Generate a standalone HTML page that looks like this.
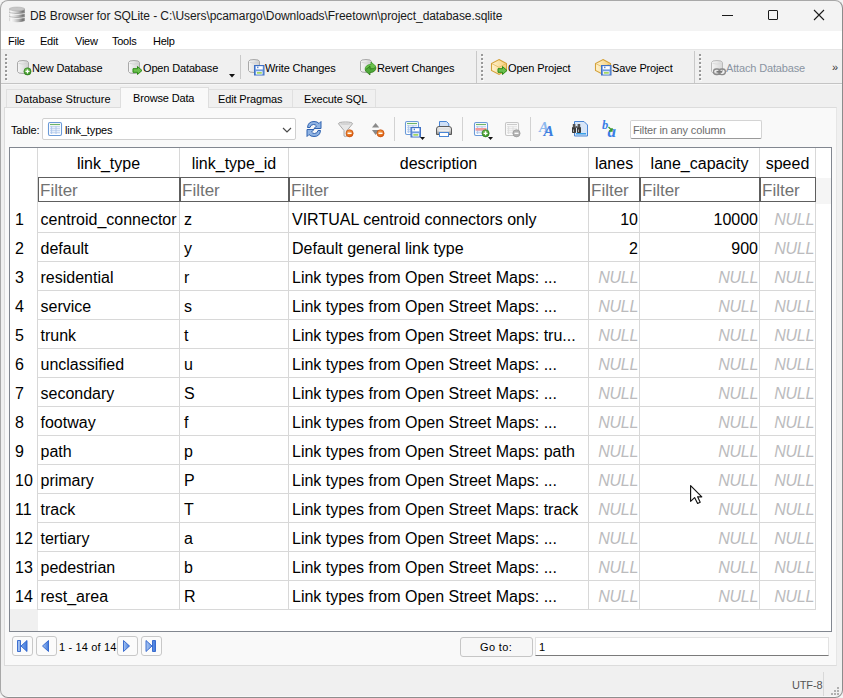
<!DOCTYPE html>
<html><head><meta charset="utf-8">
<style>
*{box-sizing:border-box;margin:0;padding:0}
html,body{width:843px;height:698px;overflow:hidden;background:#c8c8c8;font-family:"Liberation Sans",sans-serif;color:#000}
.a{position:absolute}
#win{position:absolute;left:0;top:0;width:843px;height:698px;background:#f0f0f0;overflow:hidden}
#frame{position:absolute;left:0;top:0;width:843px;height:698px;border:1px solid #a8a8a8;border-bottom-color:#8e8e8e;border-right-color:#8c8c8c;border-radius:8px;pointer-events:none}
.t12{font-size:12px;white-space:pre;line-height:14px}
.tb{font-size:11px;letter-spacing:-0.15px;white-space:pre;line-height:14px}
.sep{position:absolute;width:1px;background:#c9c9c9}
.grip{position:absolute;width:2px;border-left:1px dotted #b4b4b4}
.gl{position:absolute;background:#d8d8d8}
.cell{position:absolute;font-size:16px;white-space:pre;line-height:18px}
.null{color:#bbbbbd;font-style:italic;letter-spacing:-0.3px}
.flt{position:absolute;top:177px;height:25px;border:1px solid #5e5e5e;background:#fff;font-size:17px;color:#727272;line-height:20px;padding:3px 0 0 1px}
.pbtn{position:absolute;top:636px;width:21px;height:20px;border:1px solid #c8c8c8;border-radius:3px;background:#fbfbfb}
</style></head><body>
<div id="win">
 <!-- title bar -->
 <div class="a" style="left:0;top:0;width:843px;height:31px;background:#f3f3f3"></div>
 <svg class="a" style="left:8px;top:6px" width="18" height="18" viewBox="0 0 18 18">
  <defs><linearGradient id="dbg" x1="0" x2="1"><stop offset="0" stop-color="#c8c8c8"/><stop offset="0.1" stop-color="#fbfbfb"/><stop offset="0.3" stop-color="#e6e6e6"/><stop offset="0.6" stop-color="#b4b4b4"/><stop offset="0.88" stop-color="#707070"/><stop offset="1" stop-color="#9a9a9a"/></linearGradient></defs>
  <path d="M1.2 3V15Q9 17.4 16.9 15V3Z" fill="url(#dbg)"/>
  <ellipse cx="9" cy="3" rx="7.8" ry="1.9" fill="#c6c6c6" stroke="#b0b0b0" stroke-width="0.6"/>
  <path d="M1.2 7.5Q9 9.6 16.9 7.5M1.2 11.5Q9 13.6 16.9 11.5" stroke="#f4f4f4" stroke-width="0.9" fill="none"/><path d="M1.2 6.6Q9 8.7 16.9 6.6M1.2 10.6Q9 12.7 16.9 10.6" stroke="#9c9c9c" stroke-width="0.6" fill="none"/>
 </svg>
 <div class="a t12" style="left:30px;top:9px;color:#1a1a1a;letter-spacing:-0.07px">DB Browser for SQLite - C:\Users\pcamargo\Downloads\Freetown\project_database.sqlite</div>
 <div class="a" style="left:722px;top:15px;width:11px;height:1px;background:#1a1a1a"></div>
 <div class="a" style="left:768px;top:10px;width:10px;height:10px;border:1px solid #1a1a1a;border-radius:1px"></div>
 <svg class="a" style="left:813px;top:9px" width="12" height="12" viewBox="0 0 12 12"><path d="M1 1L11 11M11 1L1 11" stroke="#1a1a1a" stroke-width="1.1"/></svg>

 <!-- menu bar -->
 <div class="a" style="left:0;top:31px;width:843px;height:18px;background:#fff"></div>
 <div class="a t12" style="left:8px;top:34px;font-size:11px;letter-spacing:-0.25px">File</div>
 <div class="a t12" style="left:40px;top:34px;font-size:11px;letter-spacing:-0.25px">Edit</div>
 <div class="a t12" style="left:75px;top:34px;font-size:11px;letter-spacing:-0.25px">View</div>
 <div class="a t12" style="left:112px;top:34px;font-size:11px;letter-spacing:-0.25px">Tools</div>
 <div class="a t12" style="left:153px;top:34px;font-size:11px;letter-spacing:-0.25px">Help</div>
 <div class="a" style="left:0;top:49px;width:843px;height:1px;background:#e6e6e6"></div>

 <!-- toolbar -->
 <div class="a" style="left:0;top:83px;width:843px;height:1px;background:#c4c4c4"></div><div class="a" style="left:0;top:84px;width:843px;height:1px;background:#f7f7f7"></div>
 <div class="a tb" style="left:32px;top:61px">New Database</div>
 <div class="a tb" style="left:143px;top:61px">Open Database</div>
 <svg class="a" style="left:229px;top:74px" width="6" height="4"><path d="M0 0H6L3 3.5Z" fill="#111"/></svg>
 <div class="sep" style="left:240px;top:55px;height:24px"></div>
 <div class="a tb" style="left:265px;top:61px">Write Changes</div>
 <div class="a tb" style="left:377px;top:61px">Revert Changes</div>
 <div class="sep" style="left:476px;top:51px;height:32px"></div>
 <div class="a tb" style="left:508px;top:61px">Open Project</div>
 <div class="a tb" style="left:612px;top:61px">Save Project</div>
 <div class="sep" style="left:694px;top:51px;height:32px"></div>
 <div class="a tb" style="left:726px;top:61px;color:#8a94a2">Attach Database</div>
 <div class="a" style="left:832px;top:61px;font-size:11px;color:#333">»</div>

 <!-- tabs -->
 <div class="a" style="left:6px;top:89px;width:115px;height:19px;border:1px solid #e0e0e0;border-bottom:none;background:#f0f0f0"></div>
 <div class="a tb" style="left:15px;top:92px;letter-spacing:0.05px">Database Structure</div>
 <div class="a" style="left:208px;top:89px;width:85px;height:19px;border:1px solid #e0e0e0;border-bottom:none;background:#f0f0f0"></div>
 <div class="a tb" style="left:218px;top:92px">Edit Pragmas</div>
 <div class="a" style="left:292px;top:89px;width:84px;height:19px;border:1px solid #e0e0e0;border-bottom:none;background:#f0f0f0"></div>
 <div class="a tb" style="left:304px;top:92px">Execute SQL</div>
 <!-- pane -->
 <div class="a" style="left:4px;top:107px;width:833px;height:559px;border:1px solid #dcdcdc;border-right-color:#e6e6e6;background:#f9f9f9"></div>
 <div class="a" style="left:120px;top:87px;width:89px;height:21px;border:1px solid #dedede;border-bottom:none;background:#f9f9f9"></div>
 <div class="a tb" style="left:133px;top:91px">Browse Data</div>

 <!-- table selector row -->
 <div class="a tb" style="left:11px;top:123px">Table:</div>
 <div class="a" style="left:42px;top:118px;width:254px;height:22px;border:1px solid #d0d0d0;border-radius:2px;background:#fff"></div>
 <div class="a tb" style="left:65px;top:123px">link_types</div>

 <!-- grid -->
 <div class="a" style="left:9px;top:147px;width:823px;height:485px;border:1px solid #828790;background:#fff"></div>
 <div class="a" style="left:10px;top:609px;width:28px;height:22px;background:#f0f0f0"></div>
 <div class="a" style="left:816px;top:178px;width:15px;height:26px;background:#f5f5f5"></div>
<div class="gl" style="left:179px;top:148px;width:1px;height:461px"></div>
<div class="gl" style="left:288px;top:148px;width:1px;height:461px"></div>
<div class="gl" style="left:588px;top:148px;width:1px;height:461px"></div>
<div class="gl" style="left:639px;top:148px;width:1px;height:461px"></div>
<div class="gl" style="left:759px;top:148px;width:1px;height:461px"></div>
<div class="gl" style="left:815px;top:148px;width:1px;height:461px"></div>
<div class="gl" style="left:37px;top:148px;width:1px;height:462px"></div>
<div class="gl" style="left:38px;top:232px;width:778px;height:1px"></div>
<div class="gl" style="left:38px;top:261px;width:778px;height:1px"></div>
<div class="gl" style="left:38px;top:290px;width:778px;height:1px"></div>
<div class="gl" style="left:38px;top:319px;width:778px;height:1px"></div>
<div class="gl" style="left:38px;top:348px;width:778px;height:1px"></div>
<div class="gl" style="left:38px;top:377px;width:778px;height:1px"></div>
<div class="gl" style="left:38px;top:406px;width:778px;height:1px"></div>
<div class="gl" style="left:38px;top:435px;width:778px;height:1px"></div>
<div class="gl" style="left:38px;top:464px;width:778px;height:1px"></div>
<div class="gl" style="left:38px;top:493px;width:778px;height:1px"></div>
<div class="gl" style="left:38px;top:522px;width:778px;height:1px"></div>
<div class="gl" style="left:38px;top:551px;width:778px;height:1px"></div>
<div class="gl" style="left:38px;top:580px;width:778px;height:1px"></div>
<div class="gl" style="left:38px;top:609px;width:778px;height:1px"></div>
<div class="cell" style="left:15px;top:211px">1</div>
<div class="cell" style="left:40.5px;top:211px">centroid_connector</div>
<div class="cell" style="left:184px;top:211px">z</div>
<div class="cell" style="left:292px;top:211px">VIRTUAL centroid connectors only</div>
<div class="cell" style="right:205px;top:211px;text-align:right">10</div>
<div class="cell" style="right:85px;top:211px;text-align:right">10000</div>
<div class="cell null" style="right:29px;top:211px;text-align:right">NULL</div>
<div class="cell" style="left:15px;top:240px">2</div>
<div class="cell" style="left:40.5px;top:240px">default</div>
<div class="cell" style="left:184px;top:240px">y</div>
<div class="cell" style="left:292px;top:240px">Default general link type</div>
<div class="cell" style="right:205px;top:240px;text-align:right">2</div>
<div class="cell" style="right:85px;top:240px;text-align:right">900</div>
<div class="cell null" style="right:29px;top:240px;text-align:right">NULL</div>
<div class="cell" style="left:15px;top:269px">3</div>
<div class="cell" style="left:40.5px;top:269px">residential</div>
<div class="cell" style="left:184px;top:269px">r</div>
<div class="cell" style="left:292px;top:269px">Link types from Open Street Maps: ...</div>
<div class="cell null" style="right:205px;top:269px;text-align:right">NULL</div>
<div class="cell null" style="right:85px;top:269px;text-align:right">NULL</div>
<div class="cell null" style="right:29px;top:269px;text-align:right">NULL</div>
<div class="cell" style="left:15px;top:298px">4</div>
<div class="cell" style="left:40.5px;top:298px">service</div>
<div class="cell" style="left:184px;top:298px">s</div>
<div class="cell" style="left:292px;top:298px">Link types from Open Street Maps: ...</div>
<div class="cell null" style="right:205px;top:298px;text-align:right">NULL</div>
<div class="cell null" style="right:85px;top:298px;text-align:right">NULL</div>
<div class="cell null" style="right:29px;top:298px;text-align:right">NULL</div>
<div class="cell" style="left:15px;top:327px">5</div>
<div class="cell" style="left:40.5px;top:327px">trunk</div>
<div class="cell" style="left:184px;top:327px">t</div>
<div class="cell" style="left:292px;top:327px">Link types from Open Street Maps: tru...</div>
<div class="cell null" style="right:205px;top:327px;text-align:right">NULL</div>
<div class="cell null" style="right:85px;top:327px;text-align:right">NULL</div>
<div class="cell null" style="right:29px;top:327px;text-align:right">NULL</div>
<div class="cell" style="left:15px;top:356px">6</div>
<div class="cell" style="left:40.5px;top:356px">unclassified</div>
<div class="cell" style="left:184px;top:356px">u</div>
<div class="cell" style="left:292px;top:356px">Link types from Open Street Maps: ...</div>
<div class="cell null" style="right:205px;top:356px;text-align:right">NULL</div>
<div class="cell null" style="right:85px;top:356px;text-align:right">NULL</div>
<div class="cell null" style="right:29px;top:356px;text-align:right">NULL</div>
<div class="cell" style="left:15px;top:385px">7</div>
<div class="cell" style="left:40.5px;top:385px">secondary</div>
<div class="cell" style="left:184px;top:385px">S</div>
<div class="cell" style="left:292px;top:385px">Link types from Open Street Maps: ...</div>
<div class="cell null" style="right:205px;top:385px;text-align:right">NULL</div>
<div class="cell null" style="right:85px;top:385px;text-align:right">NULL</div>
<div class="cell null" style="right:29px;top:385px;text-align:right">NULL</div>
<div class="cell" style="left:15px;top:414px">8</div>
<div class="cell" style="left:40.5px;top:414px">footway</div>
<div class="cell" style="left:184px;top:414px">f</div>
<div class="cell" style="left:292px;top:414px">Link types from Open Street Maps: ...</div>
<div class="cell null" style="right:205px;top:414px;text-align:right">NULL</div>
<div class="cell null" style="right:85px;top:414px;text-align:right">NULL</div>
<div class="cell null" style="right:29px;top:414px;text-align:right">NULL</div>
<div class="cell" style="left:15px;top:443px">9</div>
<div class="cell" style="left:40.5px;top:443px">path</div>
<div class="cell" style="left:184px;top:443px">p</div>
<div class="cell" style="left:292px;top:443px">Link types from Open Street Maps: path</div>
<div class="cell null" style="right:205px;top:443px;text-align:right">NULL</div>
<div class="cell null" style="right:85px;top:443px;text-align:right">NULL</div>
<div class="cell null" style="right:29px;top:443px;text-align:right">NULL</div>
<div class="cell" style="left:15px;top:472px">10</div>
<div class="cell" style="left:40.5px;top:472px">primary</div>
<div class="cell" style="left:184px;top:472px">P</div>
<div class="cell" style="left:292px;top:472px">Link types from Open Street Maps: ...</div>
<div class="cell null" style="right:205px;top:472px;text-align:right">NULL</div>
<div class="cell null" style="right:85px;top:472px;text-align:right">NULL</div>
<div class="cell null" style="right:29px;top:472px;text-align:right">NULL</div>
<div class="cell" style="left:15px;top:501px">11</div>
<div class="cell" style="left:40.5px;top:501px">track</div>
<div class="cell" style="left:184px;top:501px">T</div>
<div class="cell" style="left:292px;top:501px">Link types from Open Street Maps: track</div>
<div class="cell null" style="right:205px;top:501px;text-align:right">NULL</div>
<div class="cell null" style="right:85px;top:501px;text-align:right">NULL</div>
<div class="cell null" style="right:29px;top:501px;text-align:right">NULL</div>
<div class="cell" style="left:15px;top:530px">12</div>
<div class="cell" style="left:40.5px;top:530px">tertiary</div>
<div class="cell" style="left:184px;top:530px">a</div>
<div class="cell" style="left:292px;top:530px">Link types from Open Street Maps: ...</div>
<div class="cell null" style="right:205px;top:530px;text-align:right">NULL</div>
<div class="cell null" style="right:85px;top:530px;text-align:right">NULL</div>
<div class="cell null" style="right:29px;top:530px;text-align:right">NULL</div>
<div class="cell" style="left:15px;top:559px">13</div>
<div class="cell" style="left:40.5px;top:559px">pedestrian</div>
<div class="cell" style="left:184px;top:559px">b</div>
<div class="cell" style="left:292px;top:559px">Link types from Open Street Maps: ...</div>
<div class="cell null" style="right:205px;top:559px;text-align:right">NULL</div>
<div class="cell null" style="right:85px;top:559px;text-align:right">NULL</div>
<div class="cell null" style="right:29px;top:559px;text-align:right">NULL</div>
<div class="cell" style="left:15px;top:588px">14</div>
<div class="cell" style="left:40.5px;top:588px">rest_area</div>
<div class="cell" style="left:184px;top:588px">R</div>
<div class="cell" style="left:292px;top:588px">Link types from Open Street Maps: ...</div>
<div class="cell null" style="right:205px;top:588px;text-align:right">NULL</div>
<div class="cell null" style="right:85px;top:588px;text-align:right">NULL</div>
<div class="cell null" style="right:29px;top:588px;text-align:right">NULL</div>
 <div class="cell" style="left:38px;width:141px;top:155px;text-align:center">link_type</div>
 <div class="cell" style="left:180px;width:108px;top:155px;text-align:center">link_type_id</div>
 <div class="cell" style="left:289px;width:299px;top:155px;text-align:center">description</div>
 <div class="cell" style="left:589px;width:50px;top:155px;text-align:center">lanes</div>
 <div class="cell" style="left:640px;width:119px;top:155px;text-align:center">lane_capacity</div>
 <div class="cell" style="left:760px;width:55px;top:155px;text-align:center">speed</div>

 <div class="flt" style="left:38px;width:142px">Filter</div>
 <div class="flt" style="left:180px;width:109px">Filter</div>
 <div class="flt" style="left:289px;width:300px">Filter</div>
 <div class="flt" style="left:589px;width:51px">Filter</div>
 <div class="flt" style="left:640px;width:120px">Filter</div>
 <div class="flt" style="left:760px;width:56px">Filter</div>
 <!-- filter input -->
 <div class="a" style="left:630px;top:120px;width:132px;height:19px;border:1px solid #d4d4d4;border-bottom:1px solid #9a9a9a;border-radius:2px;background:#fff"></div>
 <div class="a tb" style="left:633px;top:123px;color:#6d6d6d">Filter in any column</div>
 <!-- pagination -->
 <div class="pbtn" style="left:12px"></div>
 <div class="pbtn" style="left:36px"></div>
 <div class="a tb" style="left:59px;top:640px;letter-spacing:0.15px">1 - 14 of 14</div>
 <div class="pbtn" style="left:117px"></div>
 <div class="pbtn" style="left:141px"></div>
 <div class="a" style="left:460px;top:637px;width:73px;height:20px;border:1px solid #c6c6c6;border-radius:3px;background:#f7f7f7"></div>
 <div class="a tb" style="left:480px;top:640px;letter-spacing:0.35px">Go to:</div>
 <div class="a" style="left:535px;top:637px;width:294px;height:19px;background:#fff;border:1px solid #e2e2e2;border-bottom:1px solid #7a7a7a"></div>
 <div class="a tb" style="left:539px;top:640px">1</div>
 <!-- status bar -->
 <div class="a" style="left:0;top:696px;width:843px;height:1px;background:#f7f7f7"></div>
 <div class="a tb" style="left:792px;top:678px;color:#555">UTF-8</div>
 <div class="a" style="left:823px;top:672px;width:1px;height:24px;background:#d8d8d8"></div>
<svg class="a" style="left:0;top:0" width="843" height="698" viewBox="0 0 843 698">
<defs>
 <linearGradient id="cyl" x1="0" x2="1" y1="0" y2="0"><stop offset="0" stop-color="#f6f6f6"/><stop offset="0.45" stop-color="#e6e6e6"/><stop offset="1" stop-color="#cfcfcf"/></linearGradient>
 <linearGradient id="cub" x1="0" x2="1"><stop offset="0" stop-color="#fff3d0"/><stop offset="1" stop-color="#f5cf7a"/></linearGradient>
 <radialGradient id="grn" cx="0.4" cy="0.35" r="0.7"><stop offset="0" stop-color="#7cc45a"/><stop offset="1" stop-color="#2f8a1f"/></radialGradient>
 <radialGradient id="org" cx="0.4" cy="0.35" r="0.7"><stop offset="0" stop-color="#f7a04a"/><stop offset="1" stop-color="#d8560a"/></radialGradient>
 <g id="db"><path d="M0.5 2.5Q0.5 0.5 6 0.5Q11.5 0.5 11.5 2.5V11.5Q11.5 13.5 6 13.5Q0.5 13.5 0.5 11.5Z" fill="url(#cyl)" stroke="#a9a9a9" stroke-width="1"/><path d="M1.5 3.3Q6 5 10.5 3.3" stroke="#d0d0d0" stroke-width="0.8" fill="none"/></g>
 <g id="cube"><path d="M8 0.5L15.5 4.5V11.5L8 15.5L0.5 11.5V4.5Z" fill="url(#cub)" stroke="#d3a13a" stroke-width="1.1"/><path d="M0.8 4.6L8 8.3L15.2 4.6M8 8.3V15" stroke="#e2b85c" stroke-width="0.8" fill="none"/></g>
 <g id="arrow"><path d="M0.5 2.7H5V0.5L9.5 4.5L5 8.5V6.3H0.5Z" fill="#6cc04e" stroke="#2a8a14" stroke-width="1"/></g>
 <g id="floppy"><rect x="0.5" y="0.5" width="9.5" height="9.5" fill="#6f9be0" stroke="#3f70c4" stroke-width="1"/><rect x="1.8" y="1.2" width="7" height="3.2" fill="#fff"/><rect x="3.2" y="1.6" width="1.2" height="1.6" fill="#3f70c4"/><rect x="2" y="6.3" width="6.5" height="3.2" fill="#fff"/><rect x="2.8" y="7.2" width="5" height="1.4" fill="#8ccc3c"/></g>
 <g id="tbl"><rect x="0.5" y="0.5" width="13" height="13" rx="1.5" fill="#fff" stroke="#6a9ad8" stroke-width="1.1"/><path d="M2 2.5H12" stroke="#6db36a" stroke-width="1.2"/><path d="M2 4.8H12M2 6.8H12M2 8.8H12M2 10.8H12M3.6 4.2V12M8 4.2V12" stroke="#a9c4ea" stroke-width="0.9"/></g>
 <g id="pls"><circle cx="0" cy="0" r="3.6" fill="url(#grn)" stroke="#2f7d1f" stroke-width="0.6"/><path d="M-2 0H2M0 -2V2" stroke="#fff" stroke-width="1.3"/></g>
 <g id="mns"><circle cx="0" cy="0" r="3.6" fill="url(#org)" stroke="#c24a06" stroke-width="0.6"/><path d="M-2 0H2" stroke="#fff" stroke-width="1.4"/></g>
</defs>
<!-- toolbar -->
<rect x="5" y="54" width="2" height="2" fill="#999999"/><rect x="6" y="56" width="2" height="1" fill="#fbfbfb"/><rect x="5" y="58" width="2" height="2" fill="#999999"/><rect x="6" y="60" width="2" height="1" fill="#fbfbfb"/><rect x="5" y="62" width="2" height="2" fill="#999999"/><rect x="6" y="64" width="2" height="1" fill="#fbfbfb"/><rect x="5" y="66" width="2" height="2" fill="#999999"/><rect x="6" y="68" width="2" height="1" fill="#fbfbfb"/><rect x="5" y="70" width="2" height="2" fill="#999999"/><rect x="6" y="72" width="2" height="1" fill="#fbfbfb"/><rect x="5" y="74" width="2" height="2" fill="#999999"/><rect x="6" y="76" width="2" height="1" fill="#fbfbfb"/><rect x="5" y="78" width="2" height="2" fill="#999999"/><rect x="6" y="80" width="2" height="1" fill="#fbfbfb"/><rect x="481" y="54" width="2" height="2" fill="#999999"/><rect x="482" y="56" width="2" height="1" fill="#fbfbfb"/><rect x="481" y="58" width="2" height="2" fill="#999999"/><rect x="482" y="60" width="2" height="1" fill="#fbfbfb"/><rect x="481" y="62" width="2" height="2" fill="#999999"/><rect x="482" y="64" width="2" height="1" fill="#fbfbfb"/><rect x="481" y="66" width="2" height="2" fill="#999999"/><rect x="482" y="68" width="2" height="1" fill="#fbfbfb"/><rect x="481" y="70" width="2" height="2" fill="#999999"/><rect x="482" y="72" width="2" height="1" fill="#fbfbfb"/><rect x="481" y="74" width="2" height="2" fill="#999999"/><rect x="482" y="76" width="2" height="1" fill="#fbfbfb"/><rect x="481" y="78" width="2" height="2" fill="#999999"/><rect x="482" y="80" width="2" height="1" fill="#fbfbfb"/><rect x="699" y="54" width="2" height="2" fill="#999999"/><rect x="700" y="56" width="2" height="1" fill="#fbfbfb"/><rect x="699" y="58" width="2" height="2" fill="#999999"/><rect x="700" y="60" width="2" height="1" fill="#fbfbfb"/><rect x="699" y="62" width="2" height="2" fill="#999999"/><rect x="700" y="64" width="2" height="1" fill="#fbfbfb"/><rect x="699" y="66" width="2" height="2" fill="#999999"/><rect x="700" y="68" width="2" height="1" fill="#fbfbfb"/><rect x="699" y="70" width="2" height="2" fill="#999999"/><rect x="700" y="72" width="2" height="1" fill="#fbfbfb"/><rect x="699" y="74" width="2" height="2" fill="#999999"/><rect x="700" y="76" width="2" height="1" fill="#fbfbfb"/><rect x="699" y="78" width="2" height="2" fill="#999999"/><rect x="700" y="80" width="2" height="1" fill="#fbfbfb"/>
<use href="#db" x="17" y="60"/><use href="#pls" x="27.5" y="71.4"/>
<use href="#db" x="128" y="60"/><use href="#arrow" x="132.5" y="66"/>
<use href="#db" x="248" y="59"/><use href="#floppy" x="254" y="65"/>
<use href="#db" x="360" y="59"/>
<path d="M365 69.5Q365.5 64.5 371 64.5V62L376 66.5L371 71V68Q367 68 365 69.5Z" fill="#6cc04e" stroke="#3a9a24" stroke-width="0.8"/>
<path d="M376 67.5Q375.5 72.5 370 72.5V75L365 70.5L370 66V69Q374 69 376 67.5Z" fill="#4fa83a" stroke="#2a7a14" stroke-width="0.8"/>
<use href="#cube" x="491" y="59"/><use href="#arrow" x="497.5" y="66"/>
<use href="#cube" x="595" y="59"/><use href="#floppy" x="601" y="65"/>
<g opacity="0.75"><use href="#db" x="711" y="60"/></g>
<path d="M713.5 71.8a2.8 2.8 0 0 1 2.8-2.8h1a2.8 2.8 0 0 1 0 5.6h-1a2.8 2.8 0 0 1-2.8-2.8ZM718.8 71.8a2.8 2.8 0 0 1 2.8-2.8h1a2.8 2.8 0 0 1 0 5.6h-1a2.8 2.8 0 0 1-2.8-2.8Z" fill="none" stroke="#8a8a8a" stroke-width="1.3"/>
<path d="M716.5 71.8H722" stroke="#7a7a7a" stroke-width="1.6"/>
<!-- table row -->
<use href="#tbl" x="48" y="122"/>
<path d="M283 128L287 132L291 128" stroke="#4a4a4a" stroke-width="1.15" fill="none"/>
<path d="M307.5 127.5Q308 121.5 314 121.5Q317.5 121.5 319 123.5L321 121.5V128.5H314L316.5 126Q315.5 124.5 313.5 124.5Q310.5 124.5 310 127.5Z" fill="#8fb3e3" stroke="#2f62b0" stroke-width="1"/>
<path d="M320.5 130.5Q320 136.5 314 136.5Q310.5 136.5 309 134.5L307 136.5V129.5H314L311.5 132Q312.5 133.5 314.5 133.5Q317.5 133.5 318 130.5Z" fill="#8fb3e3" stroke="#2f62b0" stroke-width="1"/>
<path d="M338.5 123.8Q338.5 122 345.5 122Q352.5 122 352.5 123.8L347 130.5V136Q345.5 137.2 344 136V130.5Z" fill="#e8e8e8" stroke="#a8a8a8" stroke-width="1"/><ellipse cx="345.5" cy="123.8" rx="5.8" ry="1.3" fill="#d4d4d4"/>
<use href="#mns" x="349.6" y="133.3"/>
<path d="M372 127.6L375.6 123L379.2 127.6Z" fill="#8a8a8a"/><path d="M372 130L375.6 135L379.2 130Z" fill="#8a8a8a"/>
<use href="#mns" x="380.5" y="133.3"/>
<rect x="394" y="117" width="1" height="24" fill="#d2d2d2"/>
<use href="#tbl" x="405" y="121"/><use href="#floppy" x="410.5" y="127"/>
<path d="M420 137H425L422.5 140Z" fill="#111"/>
<linearGradient id="prn" x1="0" y1="0" x2="0" y2="1"><stop offset="0" stop-color="#f4f4f4"/><stop offset="0.5" stop-color="#d0d0d0"/><stop offset="1" stop-color="#8a8a8a"/></linearGradient>
<path d="M439.5 121.5H446.5L448.8 123.8V129H439.5Z" fill="#cfe0f7" stroke="#4a86d6" stroke-width="1"/>
<path d="M436.5 129Q436.5 126.5 439 126.5H449Q451.5 126.5 451.5 129V134.5H436.5Z" fill="url(#prn)" stroke="#5a5a5a" stroke-width="1"/>
<rect x="438.5" y="129.5" width="11" height="2" fill="#efefef"/>
<rect x="439.5" y="132.5" width="9" height="4" fill="#fff" stroke="#4a86d6" stroke-width="1"/>
<rect x="462" y="117" width="1" height="24" fill="#d2d2d2"/>
<use href="#tbl" x="474" y="122"/><rect x="475.5" y="128" width="11" height="2.6" fill="#f49a9a"/><use href="#pls" x="485.6" y="133.3"/>
<path d="M488 137H493L490.5 140Z" fill="#111"/>
<g opacity="0.5" filter="grayscale(1)"><use href="#tbl" x="505" y="122"/></g>
<circle cx="516.5" cy="133.3" r="3.6" fill="#b2b2b2" stroke="#909090" stroke-width="0.6"/><path d="M514.5 133.3H518.5" stroke="#fff" stroke-width="1.3"/>
<rect x="530" y="117" width="1" height="24" fill="#d2d2d2"/>
<text x="539" y="131.5" font-family="Liberation Serif" font-weight="bold" font-style="italic" font-size="14.5" fill="#8db8ee">A</text>
<text x="543.5" y="136.3" font-family="Liberation Serif" font-weight="bold" font-style="italic" font-size="15.5" fill="#3d7ee0">A</text>
<path d="M574.5 121.5H584L587.5 125V136H574.5Z" fill="#d8e6f8" stroke="#4a86d6" stroke-width="1"/>
<rect x="576" y="133" width="10" height="1.5" fill="#3aa0e8"/>
<rect x="572" y="127" width="4" height="6" rx="0.8" fill="#3a3a3a"/><rect x="577" y="127" width="4" height="6" rx="0.8" fill="#3a3a3a"/><rect x="572.8" y="124" width="2.6" height="3.5" fill="#555"/><rect x="577.6" y="124" width="2.6" height="3.5" fill="#555"/><rect x="575.5" y="126" width="2" height="2" fill="#666"/><rect x="573" y="129.5" width="1" height="2.5" fill="#aaa"/><rect x="578" y="129.5" width="1" height="2.5" fill="#aaa"/>
<text x="602" y="129.3" font-family="Liberation Serif" font-weight="bold" font-style="italic" font-size="12.5" fill="#3a7ee6">b</text>
<text x="607.5" y="137" font-family="Liberation Serif" font-weight="bold" font-style="italic" font-size="17" fill="#3a7ee6">a</text>
<path d="M608.5 127L612 130.5M612 128V131H609" stroke="#3a9a2a" stroke-width="1.3" fill="none"/>
</svg>
<svg class="a" style="left:0;top:630px" width="843" height="68" viewBox="0 630 843 68">
<linearGradient id="pg" x1="0" x2="1"><stop offset="0" stop-color="#a9c6f2"/><stop offset="1" stop-color="#3f78dc"/></linearGradient>
<path d="M17.5 640.5h3v11h-3Z M27 640.5V651.5L21 646Z" fill="url(#pg)" stroke="#2c62cc" stroke-width="0.9"/>
<path d="M48.5 640.5V651.5L42.5 646Z" fill="url(#pg)" stroke="#2c62cc" stroke-width="0.9"/>
<path d="M123.5 640.5V651.5L129.5 646Z" fill="url(#pg)" stroke="#2c62cc" stroke-width="0.9"/>
<path d="M152.5 640.5h3v11h-3Z M146 640.5V651.5L152 646Z" fill="url(#pg)" stroke="#2c62cc" stroke-width="0.9"/>
<g fill="#b0b0b0"><rect x="837" y="687" width="2" height="2"/><rect x="834" y="690" width="2" height="2"/><rect x="837" y="690" width="2" height="2"/><rect x="831" y="693" width="2" height="2"/><rect x="834" y="693" width="2" height="2"/><rect x="837" y="693" width="2" height="2"/></g>
</svg>
<svg class="a" style="left:0;top:0" width="843" height="698" viewBox="0 0 843 698"><path d="M690.6 485.6V501.3L694.6 497.6L697.6 503.4L700.2 502.2L697.6 496.8H701.8Z" fill="#fff" stroke="#111" stroke-width="1.15" stroke-linejoin="round"/></svg>
</div>
<div id="frame"></div>
</body></html>
